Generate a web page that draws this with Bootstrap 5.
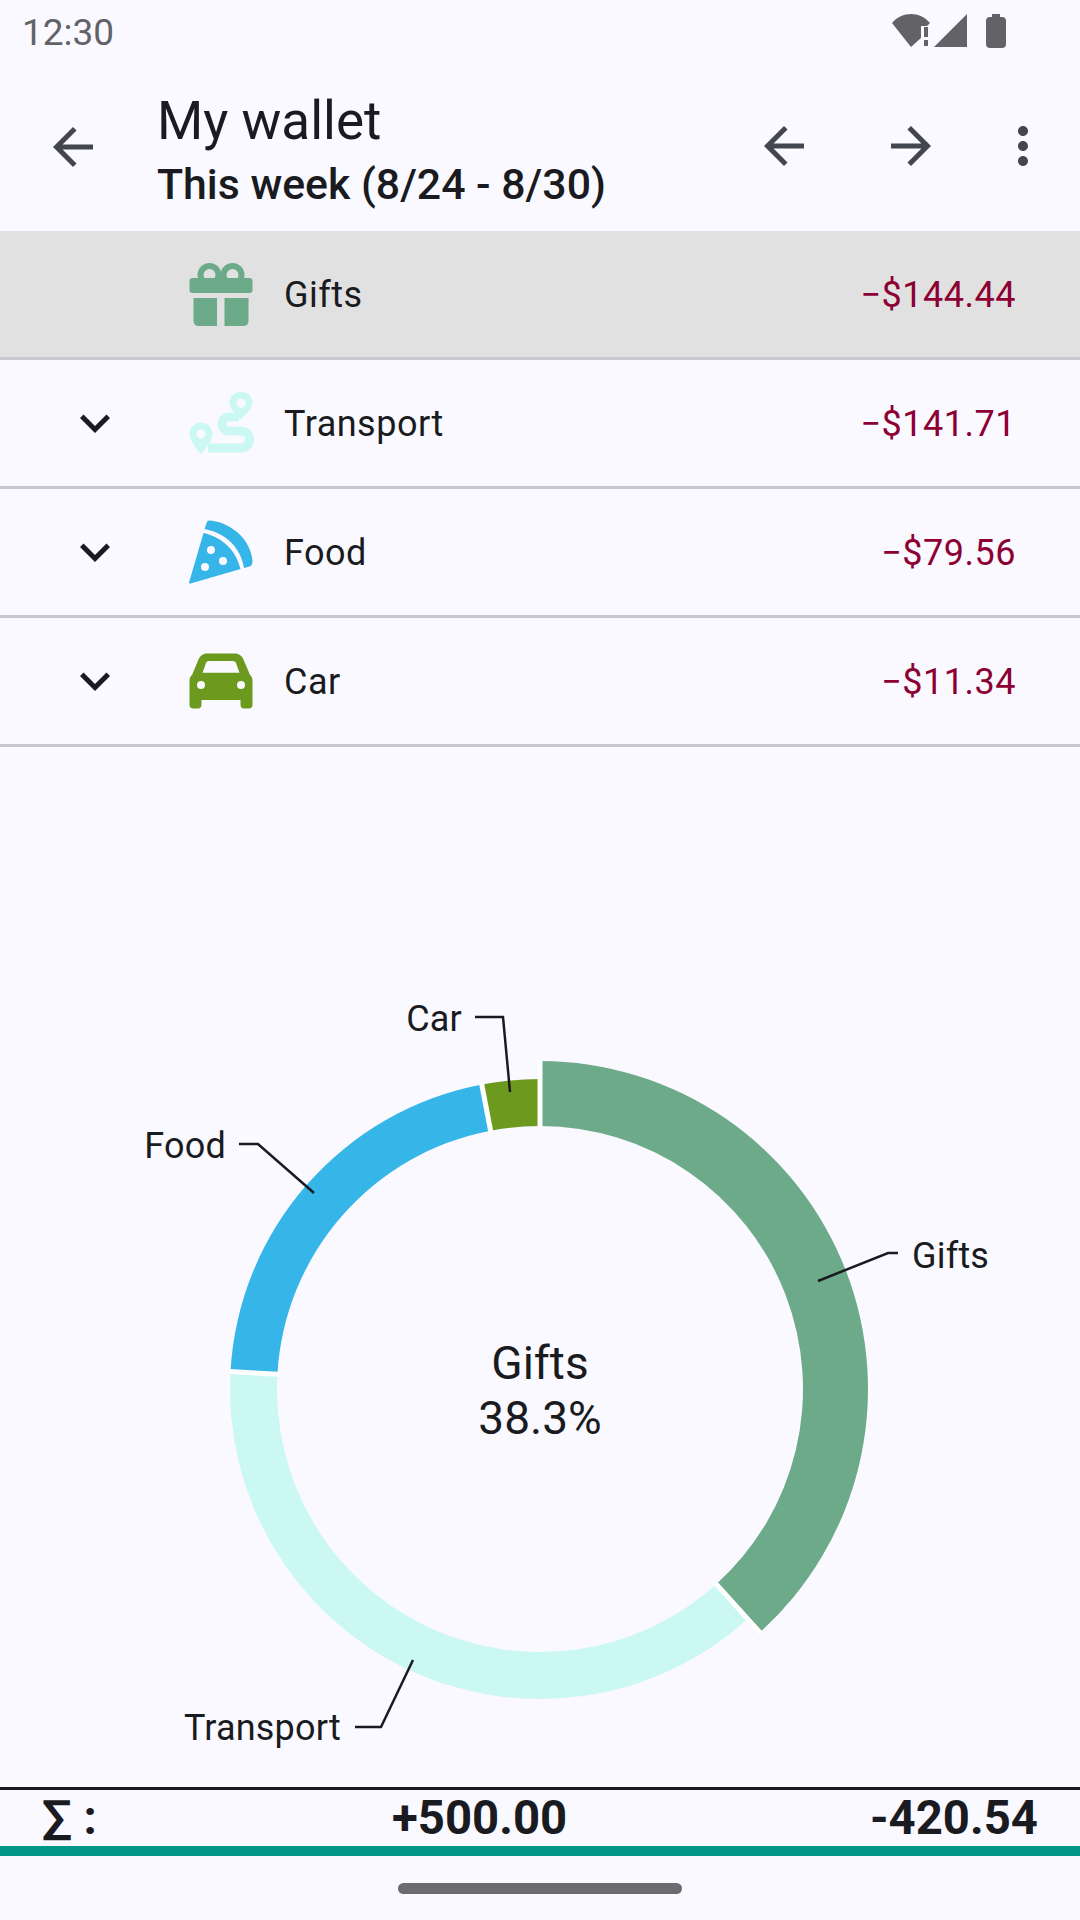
<!DOCTYPE html>
<html lang="en">
<head>
  <meta charset="UTF-8">
  <meta name="viewport" content="width=device-width, initial-scale=1.0">
  <title>My wallet</title>
  <link href="https://cdn.jsdelivr.net/npm/bootstrap@5.3.3/dist/css/bootstrap.min.css" rel="stylesheet">
  <style>
    body { background: #f9f9ff; color: #1a1b20; font-family: Roboto, "Liberation Sans", sans-serif; }
    .screen { width: 1080px; height: 1920px; background: #f9f9ff; overflow: hidden; }
    .status-bar { height: 66px; padding: 0 74px 0 22px; color: #636367; font-size: 37px; }
    .status-bar svg { margin-bottom: 4px; }
    .app-bar { height: 165px; padding: 0 0 3px 43px; }
    .app-bar svg { fill: #44464f; flex: none; }
    .app-title { margin-left: 54px; padding-top: 6px; }
    .title-main { font-size: 53px; line-height: 62px; }
    .title-sub { font-size: 42.800px; font-weight: 500; line-height: 52px; margin-top: 6px; }
    .bar-actions { margin: 0 27px 3px 0; gap: 67px; }
    .bar-actions svg + svg + svg { margin-left: -15px; }
    .cat-row { height: 129px; border-bottom: 3px solid #c7c7cd; background: transparent; padding: 0 64px 0 65px; font-size: 36px; letter-spacing: .5px; }
    .cat-row.picked { background: #e1e1e1; }
    .cat-row span { margin-top: 2px; }
    .chev-box { width: 60px; height: 60px; flex: none; fill: #1a1b20; }
    .cat-icon { width: 84px; height: 84px; margin-left: 54px; flex: none; }
    .cat-name { margin-left: 21px; }
    .cat-amount { color: #8c0033; }
    .chart-area { flex: 1 1 auto; min-height: 0; }
    .chart-area text { font-family: Roboto, "Liberation Sans", sans-serif; fill: #1a1b20; }
    .chart-labels { letter-spacing: .2px; }
    .sum-row { height: 59px; border-top: 3px solid #1a1b20; padding: 0 42px; font-size: 47.300px; font-weight: 700; line-height: 56px; }
    .sum-label { width: 350px; }
    .teal-bar { height: 10px; background: #009688; }
    .nav-zone { height: 64px; padding-top: 27px; }
    .nav-pill { width: 284px; height: 11px; border-radius: 6px; background: #6b6b70; }
  </style>
</head>
<body>
  <div class="screen d-flex flex-column">

    <!-- status bar -->
    <div class="status-bar d-flex align-items-center justify-content-between">
      <span>12:30</span>
      <svg width="114" height="34" viewBox="0 0 114 34" fill="#636367">
        <path d="M0 9C5 3 12 0 19 0s14 3 19 9l-3 3h-6v12l-10 9z"/>
        <rect x="32" y="13" width="4" height="10"/><rect x="32" y="26" width="4" height="6"/>
        <path d="M42 33 75 0v33z"/>
        <path d="M100 0h8v3h2q4 0 4 4v23q0 4-4 4H98q-4 0-4-4V7q0-4 4-4h2z"/>
      </svg>
    </div>

    <!-- app bar -->
    <div class="app-bar d-flex align-items-center">
      <svg width="60" height="60" viewBox="0 0 24 24"><path d="M20 11H7.83l5.59-5.59L12 4l-8 8 8 8 1.41-1.41L7.83 13H20v-2z"/></svg>
      <div class="app-title flex-grow-1">
        <div class="title-main">My wallet</div>
        <div class="title-sub">This week (8/24 - 8/30)</div>
      </div>
      <div class="bar-actions d-flex">
        <svg width="60" height="60" viewBox="0 0 24 24"><path d="M20 11H7.83l5.59-5.59L12 4l-8 8 8 8 1.41-1.41L7.83 13H20v-2z"/></svg>
        <svg width="60" height="60" viewBox="0 0 24 24"><path d="M4 11h12.17l-5.59-5.59L12 4l8 8-8 8-1.41-1.41L16.17 13H4v-2z"/></svg>
        <svg width="60" height="60" viewBox="0 0 24 24"><path d="M12 8c1.1 0 2-.9 2-2s-.9-2-2-2-2 .9-2 2 .9 2 2 2zm0 2c-1.1 0-2 .9-2 2s.9 2 2 2 2-.9 2-2-.9-2-2-2zm0 6c-1.1 0-2 .9-2 2s.9 2 2 2 2-.9 2-2-.9-2-2-2z"/></svg>
      </div>
    </div>

    <!-- categories -->
    <div class="cat-row picked d-flex align-items-center">
      <div class="chev-box"></div>
      <svg class="cat-icon" viewBox="0 0 84 84" fill="#6caa89">
        <circle cx="30.500" cy="23" r="9" fill="none" stroke="#6caa89" stroke-width="6"/>
        <circle cx="53.500" cy="23" r="9" fill="none" stroke="#6caa89" stroke-width="6"/>
        <rect x="10.500" y="26" width="63" height="15" rx="3"/>
        <path d="M14.500 46H38v28H20q-5.500 0-5.500-5.500zM45.500 46h24v22.500q0 5.500-5.500 5.500H45.500z"/>
      </svg>
      <span class="cat-name">Gifts</span>
      <span class="cat-amount ms-auto">−$144.44</span>
    </div>
    <div class="cat-row d-flex align-items-center">
      <svg class="chev-box" viewBox="0 0 24 24"><path d="M16.59 8.59L12 13.170 7.410 8.590 6 10l6 6 6-6z"/></svg>
      <svg class="cat-icon" viewBox="0 0 84 84" fill="#ccf8f4">
        <path fill-rule="evenodd" d="M62 10.500c-6.500 0-11.500 5-11.500 11.500 0 7 11.500 16 11.500 16s11.500-9 11.500-16c0-6.500-5-11.500-11.500-11.500zm0 7a4.500 4.500 0 1 1 0 9 4.500 4.500 0 0 1 0-9z"/>
        <path fill-rule="evenodd" d="M22 41.500c-6.500 0-11.500 5-11.500 11.500 0 8 11.500 20 11.500 20s11.500-12 11.500-20c0-6.500-5-11.500-11.500-11.500zm0 7a4.500 4.500 0 1 1 0 9 4.500 4.500 0 0 1 0-9z"/>
        <path fill="none" stroke="#ccf8f4" stroke-width="9" d="M60 36H50a7 7 0 0 0 0 14H62a8.500 8.500 0 0 1 0 17H29"/>
      </svg>
      <span class="cat-name">Transport</span>
      <span class="cat-amount ms-auto">−$141.71</span>
    </div>
    <div class="cat-row d-flex align-items-center">
      <svg class="chev-box" viewBox="0 0 24 24"><path d="M16.59 8.59L12 13.170 7.410 8.590 6 10l6 6 6-6z"/></svg>
      <svg class="cat-icon" viewBox="0 0 84 84" fill="#35b5e8">
        <path d="M25.500 19 28 12c.6-1.200 2-1.700 3.500-1.500C53 13 72 30 73.500 51c0 3-1 5-3 5.500L65 58C62 38 47 23 25.500 19z"/>
        <path fill-rule="evenodd" d="M24.500 23C43 27 57 40 61.500 59L11.500 73.500c-1 .3-1.700-.4-1.400-1.300zM32 36a4 4 0 1 0 0 8 4 4 0 0 0 0-8zm12 11a4 4 0 1 0 0 8 4 4 0 0 0 0-8zm-18 6a4 4 0 1 0 0 8 4 4 0 0 0 0-8z"/>
      </svg>
      <span class="cat-name">Food</span>
      <span class="cat-amount ms-auto">−$79.56</span>
    </div>
    <div class="cat-row d-flex align-items-center">
      <svg class="chev-box" viewBox="0 0 24 24"><path d="M16.59 8.59L12 13.170 7.410 8.590 6 10l6 6 6-6z"/></svg>
      <svg class="cat-icon" viewBox="0 0 84 84" fill="#6c9a1f">
        <path fill-rule="evenodd" d="M28 14.500H56c4 0 7 2.500 8.500 6L71 36c1.500 1 2.500 3 2.500 6V66c0 2-1.500 3.500-3.500 3.500H65c-2 0-3.500-1.500-3.500-3.500V61H22.500V66c0 2-1.500 3.500-3.500 3.500H14c-2 0-3.500-1.500-3.500-3.500V42c0-3 1-5 2.500-6L19.500 20.500C21 17 24 14.500 28 14.500zM30 22H54c1.500 0 2.500.8 3 2L60.500 33.800H23.500L27 24c.5-1.200 1.500-2 3-2zM22 42a4 4 0 1 0 0 8 4 4 0 0 0 0-8zM62 42a4 4 0 1 0 0 8 4 4 0 0 0 0-8z"/>
      </svg>
      <span class="cat-name">Car</span>
      <span class="cat-amount ms-auto">−$11.34</span>
    </div>

    <!-- donut chart, svg coords = page coords minus the 747px above -->
    <div class="chart-area">
      <svg id="donut" width="1080" height="1040" viewBox="0 747 1080 1040">
        <g id="slices"></g>
        <g fill="none" stroke="#1a1b20" stroke-width="2.500">
          <path d="M475 1017H503L510 1092"/>
          <path d="M239 1144H258L314 1193"/>
          <path d="M818 1281L888 1253H898"/>
          <path d="M413 1660L381 1727H355"/>
        </g>
        <g font-size="36" class="chart-labels">
          <text x="462" y="1031" text-anchor="end">Car</text>
          <text x="226" y="1158" text-anchor="end">Food</text>
          <text x="912" y="1268">Gifts</text>
          <text x="341" y="1740" text-anchor="end">Transport</text>
        </g>
        <g font-size="46" text-anchor="middle">
          <text x="540" y="1379">Gifts</text>
          <text x="540" y="1434">38.3%</text>
        </g>
      </svg>
    </div>

    <!-- totals -->
    <div class="sum-row d-flex">
      <span class="sum-label">∑ :</span>
      <span>+500.00</span>
      <span class="ms-auto">-420.54</span>
    </div>
    <div class="teal-bar"></div>
    <div class="nav-zone d-flex justify-content-center">
      <div class="nav-pill"></div>
    </div>

  </div>

  <script src="https://cdn.jsdelivr.net/npm/bootstrap@5.3.3/dist/js/bootstrap.bundle.min.js"></script>
  <script>
    // slices start at 12 o'clock and go clockwise, the selected one sticks out
    var cx = 540, cy = 1389, inner = 263;
    var data = [
      { value: 144.44, color: '#6caa89', outer: 328 },
      { value: 141.71, color: '#ccf8f4', outer: 310 },
      { value: 79.56, color: '#35b5e8', outer: 310 },
      { value: 11.34, color: '#6c9a1f', outer: 310 }
    ];
    var total = data.reduce(function (s, d) { return s + d.value; }, 0);

    function pt(r, a) {
      return (cx + r * Math.sin(a)).toFixed(2) + ' ' + (cy - r * Math.cos(a)).toFixed(2);
    }

    var start = 0, html = '', gaps = '';
    data.forEach(function (d, i) {
      var end = start + d.value / total * Math.PI * 2;
      var big = end - start > Math.PI ? 1 : 0;
      var prev = data[(i + data.length - 1) % data.length];
      html += '<path fill="' + d.color + '" d="M' + pt(inner, start) + 'L' + pt(d.outer, start) +
        'A' + d.outer + ' ' + d.outer + ' 0 ' + big + ' 1 ' + pt(d.outer, end) +
        'L' + pt(inner, end) + 'A' + inner + ' ' + inner + ' 0 ' + big + ' 0 ' + pt(inner, start) + 'Z"/>';
      gaps += '<path stroke="#fff" stroke-width="5" d="M' + pt(inner - 1, start) + 'L' + pt(Math.max(d.outer, prev.outer) + 1, start) + '"/>';
      start = end;
    });
    document.getElementById('slices').innerHTML = html + gaps;
  </script>
</body>
</html>
